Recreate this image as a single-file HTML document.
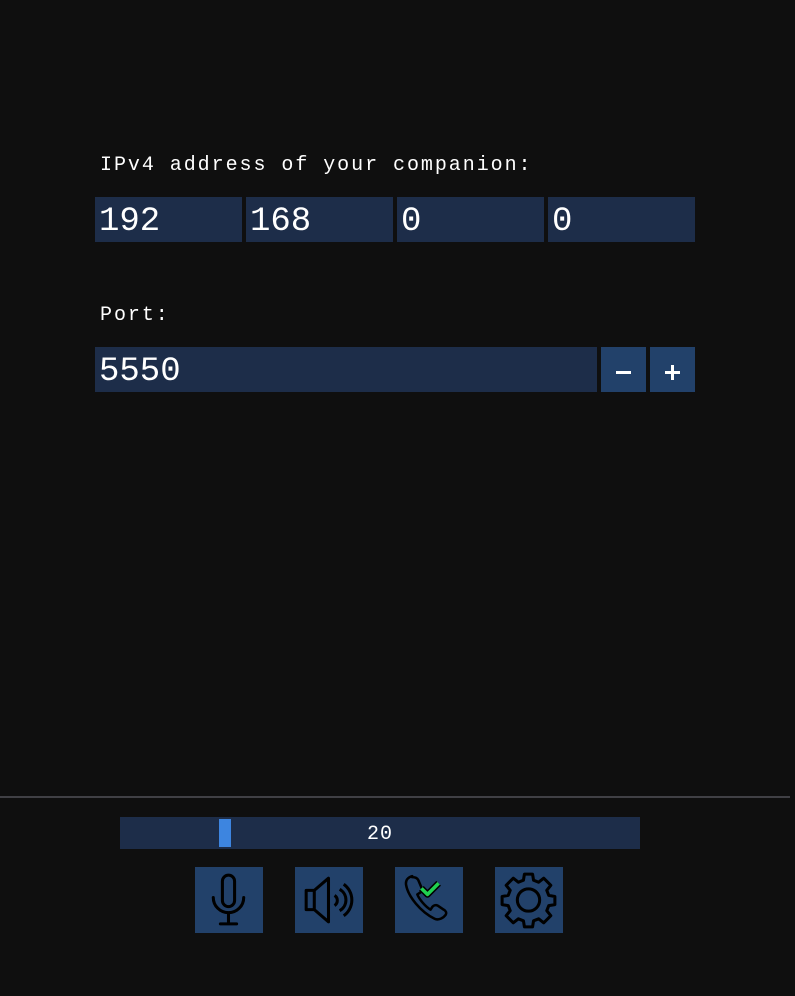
<!DOCTYPE html>
<html><head><style>
body{margin:0;width:795px;height:996px;background:#0f0f0f;position:relative;overflow:hidden;font-family:"Liberation Mono",monospace;color:#fff}
.a{position:absolute}
.lbl{font-size:20px;letter-spacing:1.95px;line-height:20px}
.in{background:#1d2d49;height:45px;top:0;font-size:34px;line-height:50px;padding-left:4px;box-sizing:border-box}
.btn{background:#22416a}
.ib{background:#22416a;width:68px;height:66px;top:867px}
</style></head><body>
<div class="a lbl" style="left:100px;top:156px">IPv4 address of your companion:</div>
<div class="a in" style="left:95px;top:197px;width:147px">192</div>
<div class="a in" style="left:246px;top:197px;width:147px">168</div>
<div class="a in" style="left:397px;top:197px;width:147px">0</div>
<div class="a in" style="left:548px;top:197px;width:147px">0</div>
<div class="a lbl" style="left:100px;top:306px">Port:</div>
<div class="a in" style="left:95px;top:347px;width:502px">5550</div>
<div class="a btn" style="left:601px;top:347px;width:45px;height:45px"><div class="a" style="left:15px;top:24px;width:15px;height:3px;background:#fff"></div></div>
<div class="a btn" style="left:650px;top:347px;width:45px;height:45px"><div class="a" style="left:15px;top:24px;width:15px;height:3px;background:#fff"></div><div class="a" style="left:21px;top:18px;width:3px;height:15px;background:#fff"></div></div>
<div class="a" style="left:0;top:796px;width:790px;height:2px;background:#404045"></div>
<div class="a" style="left:120px;top:817px;width:520px;height:32px;background:#1d2d49"></div>
<div class="a" style="left:219px;top:819px;width:12px;height:28px;background:#3d85e0"></div>
<div class="a" style="left:120px;top:817px;width:520px;height:32px;text-align:center;font-size:20px;line-height:35px;letter-spacing:1px">20</div>
<div class="a ib" style="left:195px"><svg width="68" height="66" viewBox="0 0 67 65" fill="none" stroke="#000" stroke-width="3" stroke-linecap="round"><rect x="27" y="8" width="12" height="31" rx="6"/><path d="M18 30a15 15 0 0 0 30 0M33 45v11M25 56h16"/></svg></div>
<div class="a ib" style="left:295px"><svg width="68" height="66" viewBox="0 0 67 65" fill="none" stroke="#000" stroke-width="3" stroke-linejoin="round"><path d="M11 23h8v19h-8zM19 23l14-12v43l-14-12"/><path d="M39 28a6 6 0 0 1 0 10M44 22a12 12 0 0 1 0 21M48 17a19 19 0 0 1 0 31"/></svg></div>
<div class="a ib" style="left:395px"><svg width="68" height="66" viewBox="0 0 67 65" fill="none" stroke="#000" stroke-width="2.5" stroke-linejoin="round"><path d="M17 9c-4 1-7 4-6 9 2 11 14 26 28 33 4 2 9-1 11-4 1-2 0-4-2-5l-6-4c-2-1-4 0-5 1l-2 3c-5-3-11-10-13-15l3-2c1-1 2-3 1-5l-3-7c-1-2-3-3-6-3z"/><path d="M26 21l6 6 11-11" stroke="#000" stroke-width="6.5"/><path d="M26 21l6 6 11-11" stroke="#20d050" stroke-width="3.5"/></svg></div>
<div class="a ib" style="left:495px"><svg width="68" height="66" viewBox="0 0 67 65" fill="none" stroke="#000" stroke-width="3" stroke-linejoin="round"><path d="M29 7h8l1 6 5 2 5-4 7 7-4 5 2 5 6 1v8l-6 1-2 5 4 5-7 7-5-4-5 2-1 6h-8l-1-6-5-2-5 4-7-7 4-5-2-5-6-1v-8l6-1 2-5-4-5 7-7 5 4 5-2z"/><circle cx="33" cy="32.5" r="11"/></svg></div>
</body></html>
